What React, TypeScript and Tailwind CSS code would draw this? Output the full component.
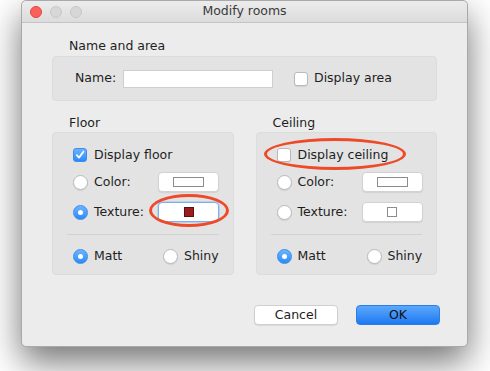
import React from "react";

const font = "font-['DejaVu_Sans',_'Liberation_Sans',_sans-serif]";

const Radio = ({ on }: { on?: boolean }) =>
  on ? (
    <span className="flex h-[15px] w-[15px] shrink-0 items-center justify-center rounded-full border border-[#3a8cf0] bg-linear-to-b from-[#6cb5fd] to-[#2a8af6]">
      <span className="h-[5px] w-[5px] rounded-full bg-white" />
    </span>
  ) : (
    <span className="h-[15px] w-[15px] shrink-0 rounded-full border border-[#b9b9b9] bg-white shadow-[0_1px_1px_rgba(0,0,0,0.08)]" />
  );

const Checkbox = ({ on }: { on?: boolean }) =>
  on ? (
    <span className="flex h-[14px] w-[14px] shrink-0 items-center justify-center rounded-[3px] border border-[#3a8cf0] bg-linear-to-b from-[#6cb5fd] to-[#2a8af6]">
      <svg width="10" height="10" viewBox="0 0 10 10">
        <path d="M1.8 5.2 L4 7.6 L8.4 1.8" fill="none" stroke="white" strokeWidth="1.8" strokeLinecap="round" strokeLinejoin="round" />
      </svg>
    </span>
  ) : (
    <span className="h-[14px] w-[14px] shrink-0 rounded-[3px] border border-[#b9b9b9] bg-white shadow-[0_1px_1px_rgba(0,0,0,0.08)]" />
  );

const SwatchButton = ({ kind, focus }: { kind: "color" | "red" | "empty"; focus?: boolean }) => (
  <div
    className={`flex h-[20px] w-[61px] shrink-0 items-center justify-center rounded-[4px] bg-white ${
      focus ? "border border-[#7ab0f2] shadow-[0_0_0_1px_rgba(122,176,242,0.35)]" : "border border-[#d2d2d2] shadow-[0_1px_1px_rgba(0,0,0,0.08)]"
    }`}
  >
    {kind === "color" && <div className="h-[10px] w-[31px] border border-[#8c8c8c] bg-white" />}
    {kind === "red" && <div className="h-[10px] w-[10px] border border-[#5a1010] bg-[#9b1c1c]" />}
    {kind === "empty" && <div className="h-[10px] w-[10px] border border-[#8c8c8c] bg-white" />}
  </div>
);

const SurfaceBox = ({
  title,
  checkLabel,
  checked,
  texture,
  textureOn,
  textureFocus,
}: {
  title: string;
  checkLabel: string;
  checked?: boolean;
  texture: "red" | "empty";
  textureOn?: boolean;
  textureFocus?: boolean;
}) => (
  <div className="w-[182px]">
    <div className="mb-[1px] h-[16px] pl-[17px] leading-[16px]">{title}</div>
    <div className="h-[143px] rounded-[4px] border border-[#dcdcdc] bg-[#e3e3e3] pl-[20px] pr-[10px] pt-[12px]">
      <div className="flex h-[20px] items-center">
        <Checkbox on={checked} />
        <span className="ml-[7px]">{checkLabel}</span>
      </div>
      <div className="mt-[7px] flex h-[20px] items-center">
        <Radio />
        <span className="ml-[6px] w-[64px] shrink-0">Color:</span>
        <SwatchButton kind="color" />
      </div>
      <div className="mt-[10px] flex h-[20px] items-center">
        <Radio on={textureOn} />
        <span className="ml-[6px] w-[64px] shrink-0">Texture:</span>
        <SwatchButton kind={texture} focus={textureFocus} />
      </div>
      <div className="ml-[-6px] mr-[4px] mt-[12px] h-px bg-[#d2d2d2]" />
      <div className="mt-[11px] flex h-[20px] items-center">
        <div className="flex w-[90px] items-center">
          <Radio on />
          <span className="ml-[6px]">Matt</span>
        </div>
        <Radio />
        <span className="ml-[6px]">Shiny</span>
      </div>
    </div>
  </div>
);

export default function App() {
  return (
    <div className={`h-[371px] w-[490px] overflow-hidden bg-white text-[12.5px] text-[#1e1e1e] ${font}`}>
      <div className="relative ml-[21px] flex h-[347px] w-[447px] flex-col rounded-[5px] border border-[#a9a9a9] bg-[#ececec] shadow-[0_15px_35px_rgba(0,0,0,0.55)]">
        <div className="relative flex h-[22px] shrink-0 items-center justify-center rounded-t-[5px] border-b border-[#c4c4c4] bg-linear-to-b from-[#ececec] to-[#dcdcdc]">
          <div className="absolute left-[8px] top-[5px] flex gap-[8px]">
            <span className="h-[12px] w-[12px] rounded-full border border-[#e2463f] bg-[#fc605c]" />
            <span className="h-[12px] w-[12px] rounded-full border border-[#c8c8c8] bg-[#d7d7d7]" />
            <span className="h-[12px] w-[12px] rounded-full border border-[#c8c8c8] bg-[#d7d7d7]" />
          </div>
          <span className="text-[#3a3a3a]">Modify rooms</span>
        </div>

        <div className="px-[30px] pt-[15px]">
          <div className="mb-[2px] h-[16px] pl-[17px] leading-[16px]">Name and area</div>
          <div className="flex h-[45px] items-center rounded-[4px] border border-[#dcdcdc] bg-[#e3e3e3] pl-[22px]">
            <span className="w-[48px]">Name:</span>
            <div className="h-[18px] w-[150px] border border-[#cfcfcf] bg-white" />
            <div className="ml-[21px] flex items-center">
              <Checkbox />
              <span className="ml-[6px]">Display area</span>
            </div>
          </div>

          <div className="mt-[14px] flex gap-[22px]">
            <SurfaceBox title="Floor" checkLabel="Display floor" checked texture="red" textureOn textureFocus />
            <SurfaceBox title="Ceiling" checkLabel="Display ceiling" texture="empty" />
          </div>
        </div>

        <div className="mt-[30px] flex justify-end gap-[18px] pr-[27px]">
          <button className="h-[20px] w-[84px] rounded-[4px] border border-[#cfcfcf] bg-white leading-[18px] shadow-[0_1px_1px_rgba(0,0,0,0.08)]">
            Cancel
          </button>
          <button className="h-[20px] w-[84px] rounded-[4px] border border-[#2b7de9] bg-linear-to-b from-[#5ba8fb] to-[#1b78f2] leading-[18px] text-[#111]">
            OK
          </button>
        </div>

        <div className="absolute left-[127px] top-[193px] h-[33px] w-[80px] rounded-[50%] border-[3px] border-[#ee4a2a]" />
        <div className="absolute left-[242px] top-[137px] h-[32px] w-[142px] rounded-[50%] border-[3px] border-[#ee4a2a]" />
      </div>
    </div>
  );
}
